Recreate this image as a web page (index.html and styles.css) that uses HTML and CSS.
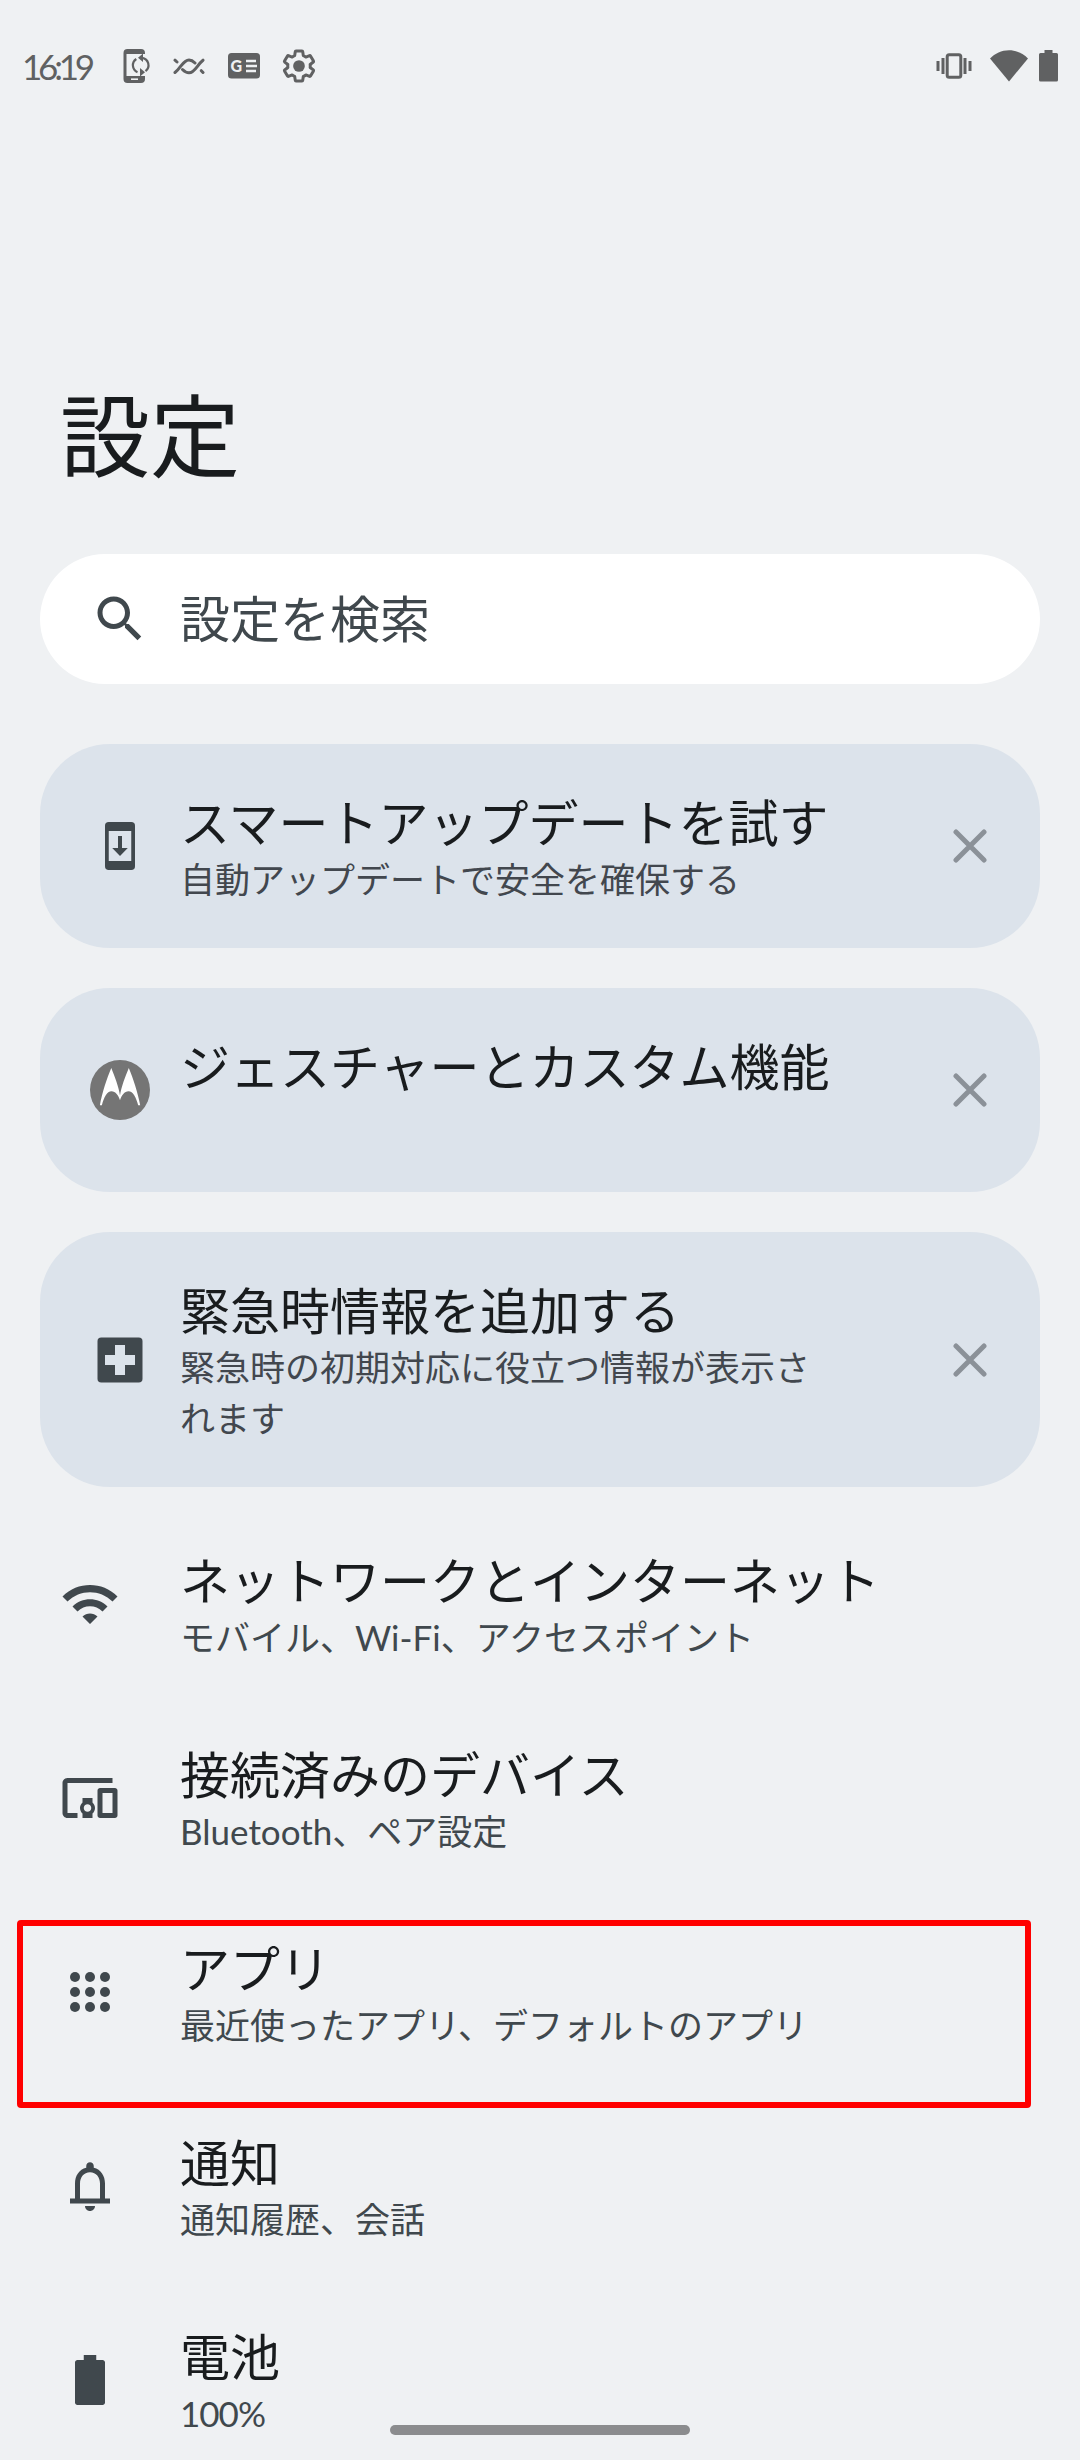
FILE: index.html
```html
<!DOCTYPE html>
<html lang="ja">
<head>
    <meta charset="UTF-8">
    <meta name="viewport" content="width=device-width, initial-scale=1.0">
    <title>設定</title>
    <link rel="stylesheet" href="styles.css">
</head>
<body>
    <div class="status-bar">
        <span class="time">16:19</span>
        <div class="status-left">
            <svg class="sync" width="28" height="36" viewBox="0 0 28 36">
                <path d="M22 6V5a4 4 0 0 0-4-4H4.500a4 4 0 0 0-4 4v26a4 4 0 0 0 4 4H18a4 4 0 0 0 4-4v-3H3.500V6z"/>
                <path d="M8 31.200h7" stroke="#eff1f3" stroke-width="1.600"/>
                <path d="M14.500 24.200A7.500 7.500 0 0 1 13.300 11M19 9.800A7.500 7.500 0 0 1 22.500 23.200" fill="none" stroke="#606162" stroke-width="2.200"/>
                <path d="M20 5.500v8.600l-5-4.300zM17 20v8.600l5-4.300z"/>
            </svg>
            <svg class="wave" width="32" height="36" viewBox="0 0 32 36">
                <g fill="none" stroke="#606162" stroke-width="3" stroke-linecap="round">
                    <path d="M2 24.500C8 20 10 12 16 12c3 0 4.500 1.500 6 3"/>
                    <path d="M9.500 21.500c2 2 4 3.300 6.500 3.300 6 0 8-8 14-12.600"/>
                    <path d="M2 12.200l2 1.800M28.300 22.700l1.700 1.800"/>
                </g>
            </svg>
            <svg class="news" width="32" height="26" viewBox="0 0 32 26">
                <rect width="32" height="25.500" rx="3.500"/>
                <text x="2.500" y="18.700" class="news-letter">G</text>
                <path d="M18 8h10M18 13h11M18 18h10" stroke="#eff1f3" stroke-width="2.400"/>
            </svg>
            <svg class="gear" width="36" height="36" viewBox="0 0 24 24">
                <path fill="none" stroke="#606162" stroke-width="2" stroke-linejoin="round" d="M19.430 12.980c.04-.32.07-.64.07-.98s-.03-.66-.07-.98l2.110-1.650c.19-.15.24-.42.12-.64l-2-3.460c-.09-.16-.26-.25-.44-.25-.06 0-.12.01-.17.03l-2.490 1c-.52-.4-1.080-.73-1.690-.98l-.38-2.650C14.460 2.180 14.250 2 14 2h-4c-.25 0-.46.18-.49.42l-.38 2.650c-.61.25-1.170.59-1.690.98l-2.490-1c-.06-.02-.12-.03-.18-.03-.17 0-.34.09-.43.25l-2 3.460c-.13.22-.07.49.12.64l2.110 1.650c-.04.32-.07.65-.07.98s.03.66.07.98l-2.110 1.650c-.19.15-.24.42-.12.64l2 3.460c.09.16.26.25.44.25.06 0 .12-.01.17-.03l2.490-1c.52.4 1.080.73 1.690.98l.38 2.650c.03.24.24.42.49.42h4c.25 0 .46-.18.49-.42l.38-2.650c.61-.25 1.170-.59 1.690-.98l2.490 1c.06.02.12.03.18.03.17 0 .34-.09.43-.25l2-3.460c.12-.22.07-.49-.12-.64l-2.110-1.650z"/>
                <circle cx="12" cy="12" r="3.900"/>
            </svg>
        </div>
        <div class="status-right">
            <svg class="vibrate" width="36" height="26" viewBox="0 0 36 26">
                <rect x="11.200" y="1.700" width="13.600" height="22.600" rx="2" fill="none" stroke="#606162" stroke-width="3"/>
                <path d="M2 8v10M7 5v16M29 5v16M34 8v10" stroke="#606162" stroke-width="3"/>
            </svg>
            <svg class="signal" width="38" height="32" viewBox="0 0 38 32">
                <path d="M19 31.500L0 8.500C5 3.500 11.500.3 19 .3s14 3.200 19 8.200z"/>
            </svg>
            <svg width="19" height="32" viewBox="0 0 19 32">
                <path d="M5.500 0h8v3H17.500a1.500 1.500 0 0 1 1.500 1.500V30a1.500 1.500 0 0 1-1.500 1.500H1.500A1.500 1.500 0 0 1 0 30V4.500A1.500 1.500 0 0 1 1.500 3h4z"/>
            </svg>
        </div>
    </div>

    <h1>設定</h1>

    <div class="search">
        <svg class="icon" viewBox="0 0 24 24">
            <path d="M15.500 14h-.79l-.28-.27C15.410 12.590 16 11.110 16 9.500 16 5.910 13.090 3 9.500 3S3 5.910 3 9.500 5.910 16 9.500 16c1.610 0 3.090-.59 4.230-1.570l.27.28v.79l5 4.990L20.490 19l-4.990-5zm-6 0C7.010 14 5 11.990 5 9.500S7.010 5 9.500 5 14 7.010 14 9.500 11.990 14 9.500 14z"/>
        </svg>
        <span>設定を検索</span>
    </div>

    <!-- Suggestions -->
    <div class="cards">
        <div class="card">
            <svg class="icon" viewBox="0 0 24 24">
                <path fill-rule="evenodd" d="M7.500 2.400h9A1.500 1.500 0 0 1 18 3.900v16.200a1.500 1.500 0 0 1-1.500 1.500h-9A1.500 1.500 0 0 1 6 20.100V3.900a1.500 1.500 0 0 1 1.500-1.500zM7.500 6v12h9V6z"/>
                <path d="M11.200 8h1.600v4.800h2.300L12 16l-3.100-3.200h2.300z"/>
            </svg>
            <div class="text">
                <div class="title">スマートアップデートを試す</div>
                <div class="summary">自動アップデートで安全を確保する</div>
            </div>
            <svg class="close" viewBox="0 0 34 34"><path d="M3 3l28 28M31 3L3 31"/></svg>
        </div>
        <div class="card">
            <svg class="icon" viewBox="0 0 60 60">
                <circle cx="30" cy="30" r="30" fill="#757575"/>
                <path fill="#fff" d="M21.300 8C24.500 16 28.800 27 30 35.500 31.200 27 35.500 16 38.800 8 43 18 48 33 50.200 45.300h-2C46 37 43 31.200 38.500 31.200c-4 0-7 4-8.500 9.100-1.500-5.100-4.500-9.100-8.500-9.100-4.500 0-7.500 5.800-9.600 14.100h-2C12 33 17 18 21.300 8z"/>
            </svg>
            <div class="text">
                <div class="title">ジェスチャーとカスタム機能</div>
            </div>
            <svg class="close" viewBox="0 0 34 34"><path d="M3 3l28 28M31 3L3 31"/></svg>
        </div>
        <div class="card">
            <svg class="icon" viewBox="0 0 24 24">
                <path fill-rule="evenodd" d="M4.500 3h15A1.500 1.500 0 0 1 21 4.500v15a1.500 1.500 0 0 1-1.500 1.500h-15A1.500 1.500 0 0 1 3 19.500v-15A1.500 1.500 0 0 1 4.500 3zM10 6v4H6v4h4v4h4v-4h4v-4h-4V6z"/>
            </svg>
            <div class="text">
                <div class="title">緊急時情報を追加する</div>
                <div class="summary">緊急時の初期対応に役立つ情報が表示されます</div>
            </div>
            <svg class="close" viewBox="0 0 34 34"><path d="M3 3l28 28M31 3L3 31"/></svg>
        </div>
    </div>

    <!-- Settings list -->
    <div class="list">
        <div class="row">
            <svg class="icon" viewBox="0 0 24 24">
                <path d="M1 9l2 2c4.970-4.970 13.030-4.970 18 0l2-2C16.930 2.930 7.080 2.930 1 9zm8 8l3 3 3-3c-1.650-1.660-4.340-1.660-6 0zm-4-4l2 2c2.760-2.760 7.240-2.760 10 0l2-2C15.140 9.140 8.870 9.140 5 13z"/>
            </svg>
            <div class="text">
                <div class="title">ネットワークとインターネット</div>
                <div class="summary">モバイル、Wi-Fi、アクセスポイント</div>
            </div>
        </div>
        <div class="row">
            <svg class="icon" viewBox="0 0 24 24">
                <path d="M3 6h18V4H3c-1.100 0-2 .9-2 2v12c0 1.100.9 2 2 2h4v-2H3V6zm10 6H9v1.780c-.61.55-1 1.330-1 2.220s.39 1.670 1 2.220V20h4v-1.780c.61-.55 1-1.340 1-2.220s-.39-1.670-1-2.220V12zm-2 5.500c-.83 0-1.500-.67-1.500-1.500s.67-1.500 1.500-1.500 1.500.67 1.500 1.500-.67 1.500-1.500 1.500zM22 8h-6c-.5 0-1 .5-1 1v10c0 .5.5 1 1 1h6c.5 0 1-.5 1-1V9c0-.5-.5-1-1-1zm-1 10h-4v-8h4v8z"/>
            </svg>
            <div class="text">
                <div class="title">接続済みのデバイス</div>
                <div class="summary">Bluetooth、ペア設定</div>
            </div>
        </div>
        <div class="row selected">
            <svg class="icon" viewBox="0 0 24 24">
                <circle cx="6" cy="6" r="2"/><circle cx="12" cy="6" r="2"/><circle cx="18" cy="6" r="2"/>
                <circle cx="6" cy="12" r="2"/><circle cx="12" cy="12" r="2"/><circle cx="18" cy="12" r="2"/>
                <circle cx="6" cy="18" r="2"/><circle cx="12" cy="18" r="2"/><circle cx="18" cy="18" r="2"/>
            </svg>
            <div class="text">
                <div class="title">アプリ</div>
                <div class="summary">最近使ったアプリ、デフォルトのアプリ</div>
            </div>
        </div>
        <div class="row">
            <svg class="icon" viewBox="0 0 24 24">
                <path d="M18 17v-6c0-3.070-1.630-5.640-4.500-6.320V4c0-.83-.67-1.500-1.500-1.500s-1.500.67-1.500 1.500v.68C7.640 5.360 6 7.920 6 11v6H4v2h16v-2h-2zm-2 0H8v-6c0-2.480 1.510-4.500 4-4.500s4 2.020 4 4.500v6zm-4 5c1.100 0 2-.9 2-2h-4c0 1.100.9 2 2 2z"/>
            </svg>
            <div class="text">
                <div class="title">通知</div>
                <div class="summary">通知履歴、会話</div>
            </div>
        </div>
        <div class="row">
            <svg class="icon" viewBox="0 0 24 24">
                <path d="M17 4h-2.500V2h-5v2H7c-.55 0-1 .45-1 1v16c0 .55.45 1 1 1h10c.55 0 1-.45 1-1V5c0-.55-.45-1-1-1z"/>
            </svg>
            <div class="text">
                <div class="title">電池</div>
                <div class="summary level">100%</div>
            </div>
        </div>
    </div>

    <div class="nav-handle"></div>
</body>
</html>
```

FILE: styles.css
```css
* {
    margin: 0;
    padding: 0;
    box-sizing: border-box;
}

body {
    position: relative;
    width: 1080px;
    height: 2460px;
    overflow: hidden;
    background-color: #eff1f3;
    color: #191c1e;
    font-family: Lato, "Noto Sans CJK JP", sans-serif;
}

svg {
    display: block;
    flex-shrink: 0;
}

/* Status bar */
.status-bar {
    display: flex;
    align-items: center;
    height: 132px;
    padding: 0 22px;
    color: #606162;
    fill: #606162;
}

.time {
    width: 101px;
    font-size: 35px;
    line-height: 40px;
    letter-spacing: -4.2px;
    white-space: nowrap;
}

.status-left,
.status-right {
    display: flex;
    align-items: center;
}

.status-right {
    margin-left: auto;
}

.wave {
    margin-left: 22px;
}

.news {
    margin-left: 23px;
}

.news-letter {
    font-size: 16px;
    font-weight: 900;
    fill: #eff1f3;
}

.gear {
    margin-left: 21px;
}

.signal {
    margin: 0 11px 0 18px;
}

h1 {
    padding: 253px 60px 69px;
    font-size: 90px;
    font-weight: 400;
    line-height: 100px;
}

.icon {
    width: 60px;
    height: 60px;
    fill: #40484d;
}

/* Search box */
.search {
    display: flex;
    align-items: center;
    gap: 30px;
    height: 130px;
    margin: 0 40px 60px;
    padding: 0 50px;
    border-radius: 65px;
    background-color: #fff;
    color: #40484d;
    font-size: 50px;
    line-height: 60px;
}

/* Suggestion cards */
.cards {
    display: flex;
    flex-direction: column;
    gap: 40px;
    margin: 0 40px 20px;
}

.card {
    display: flex;
    align-items: center;
    gap: 30px;
    min-height: 204px;
    padding: 0 53px 0 50px;
    border-radius: 70px;
    background-color: #dce3eb;
}

.card .text {
    align-self: flex-start;
    width: 660px;
    padding: 49px 0 43px;
}

.title {
    font-size: 50px;
    line-height: 61px;
    white-space: nowrap;
}

.summary {
    color: #40484d;
    font-size: 35px;
    line-height: 51px;
}

.card .summary {
    color: #42474e;
}

.level {
    letter-spacing: -1px;
}

.close {
    width: 34px;
    height: 34px;
    margin-left: auto;
    fill: none;
    stroke: #8b9198;
    stroke-width: 5;
    stroke-linecap: round;
}

/* List */
.row {
    position: relative;
    display: flex;
    align-items: center;
    gap: 60px;
    height: 194px;
    padding: 0 60px;
}

.row .text {
    align-self: flex-start;
    padding-top: 44px;
}

.selected::after {
    content: "";
    position: absolute;
    top: 25px;
    left: 17px;
    box-sizing: border-box;
    width: 1014px;
    height: 188px;
    border: 6px solid #ff0000;
    border-radius: 4px;
}

.nav-handle {
    position: absolute;
    left: 390px;
    bottom: 25px;
    width: 300px;
    height: 10px;
    border-radius: 5px;
    background-color: #8b8c8e;
}
```
